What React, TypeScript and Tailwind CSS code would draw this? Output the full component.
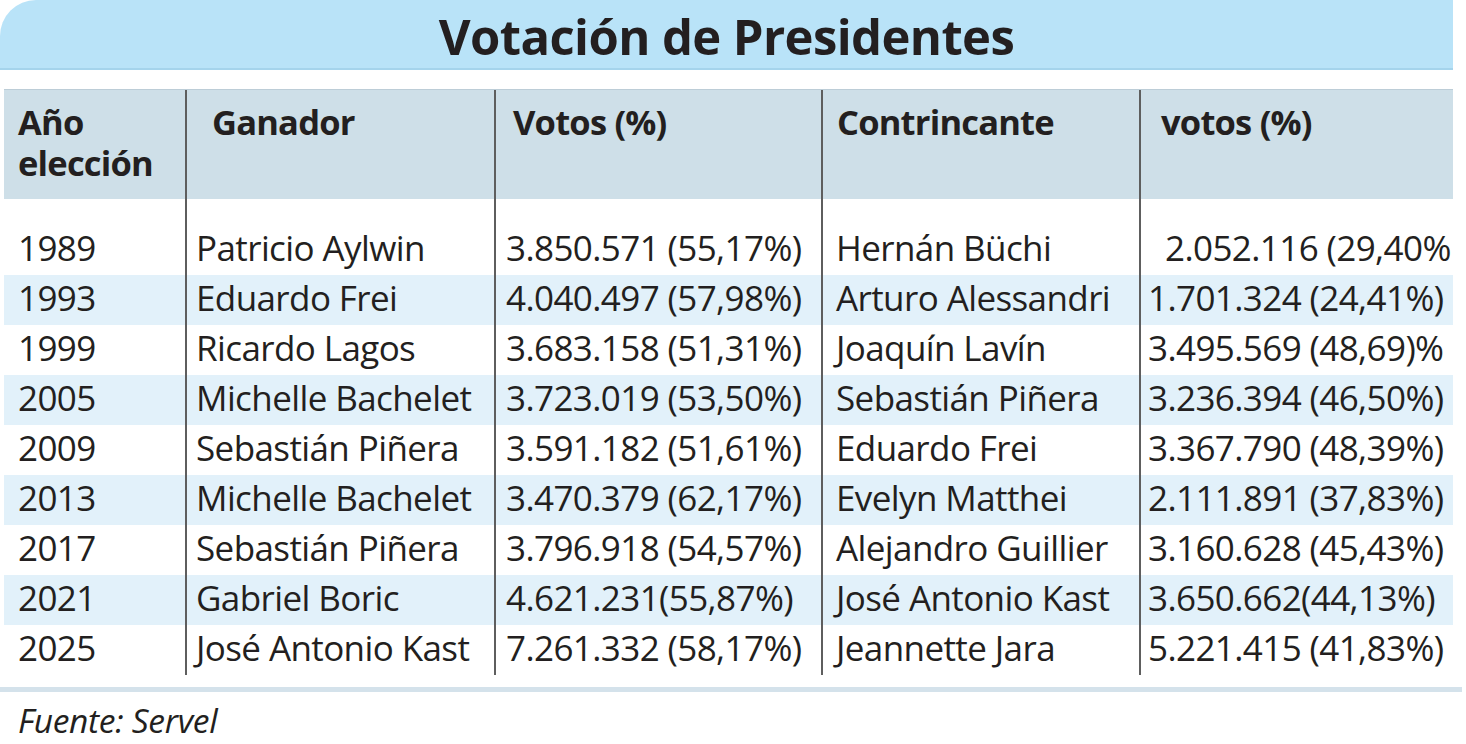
import React from "react";

const rows: string[][] = [
  ["1989", "Patricio Aylwin", "3.850.571 (55,17%)", "Hernán Büchi", "2.052.116 (29,40%"],
  ["1993", "Eduardo Frei", "4.040.497 (57,98%)", "Arturo Alessandri", "1.701.324 (24,41%)"],
  ["1999", "Ricardo Lagos", "3.683.158 (51,31%)", "Joaquín Lavín", "3.495.569 (48,69)%"],
  ["2005", "Michelle Bachelet", "3.723.019 (53,50%)", "Sebastián Piñera", "3.236.394 (46,50%)"],
  ["2009", "Sebastián Piñera", "3.591.182 (51,61%)", "Eduardo Frei", "3.367.790 (48,39%)"],
  ["2013", "Michelle Bachelet", "3.470.379 (62,17%)", "Evelyn Matthei", "2.111.891 (37,83%)"],
  ["2017", "Sebastián Piñera", "3.796.918 (54,57%)", "Alejandro Guillier", "3.160.628 (45,43%)"],
  ["2021", "Gabriel Boric", "4.621.231(55,87%)", "José Antonio Kast", "3.650.662(44,13%)"],
  ["2025", "José Antonio Kast", "7.261.332 (58,17%)", "Jeannette Jara", "5.221.415 (41,83%)"],
];

const cols = "grid grid-cols-[181px_309px_327px_318px_314px]";
const line = "border-l-2 border-[#5e5e5e]";
const dataPad = ["pl-[14px]", "pl-[9px]", "pl-[10px]", "pl-[13px]", "pl-[7px]"];

export default function App() {
  return (
    <div className="w-[1466px] h-[744px] bg-white overflow-hidden font-['Open_Sans',sans-serif] text-[#231f20]">
      {/* Title bar */}
      <div className="w-[1453px] h-[70px] bg-[#b9e3f8] rounded-tl-[36px] border-b-2 border-[#a5d4ec] flex items-center justify-center pt-[5px]">
        <h1 className="text-[49px] font-bold leading-none tracking-[-0.6px]">Votación de Presidentes</h1>
      </div>

      {/* Table */}
      <div className="ml-[4px] mt-[19px] w-[1449px]">
        <div className={`${cols} h-[110px] bg-[#cedfe8] border-t border-[#bccdd7] text-[34.5px] font-bold leading-[41px] tracking-[-0.8px]`}>
          <div className="pl-[14px] pt-[11px]">
            Año
            <br />
            elección
          </div>
          <div className={`${line} pl-[25px] pt-[11px]`}>Ganador</div>
          <div className={`${line} pl-[17px] pt-[11px]`}>Votos (%)</div>
          <div className={`${line} pl-[14px] pt-[11px]`}>Contrincante</div>
          <div className={`${line} pl-[20px] pt-[11px]`}>votos (%)</div>
        </div>

        <div className={`${cols} h-[26px]`}>
          <div />
          <div className={line} />
          <div className={line} />
          <div className={line} />
          <div className={line} />
        </div>

        {rows.map((r, i) => (
          <div
            key={r[0]}
            className={`${cols} h-[50px] text-[35px] tracking-[-0.6px] leading-[46px] ${i % 2 === 1 ? "bg-[#e2f1fa]" : "bg-white"}`}
          >
            {r.map((c, j) => (
              <div
                key={j}
                className={`${j > 0 ? line : ""} ${dataPad[j]} whitespace-nowrap overflow-hidden`}
              >
                <span className={i === 0 && j === 4 ? "ml-[17px]" : ""}>{c}</span>
              </div>
            ))}
          </div>
        ))}
      </div>

      {/* Bottom rule */}
      <div className="mt-[12px] w-[1462px] h-[5px] bg-[#d4e2eb]" />

      {/* Source */}
      <div className="mt-[8px] pl-[18px] text-[33.5px] italic leading-[40px] tracking-[-0.3px]">Fuente: Servel</div>
    </div>
  );
}
